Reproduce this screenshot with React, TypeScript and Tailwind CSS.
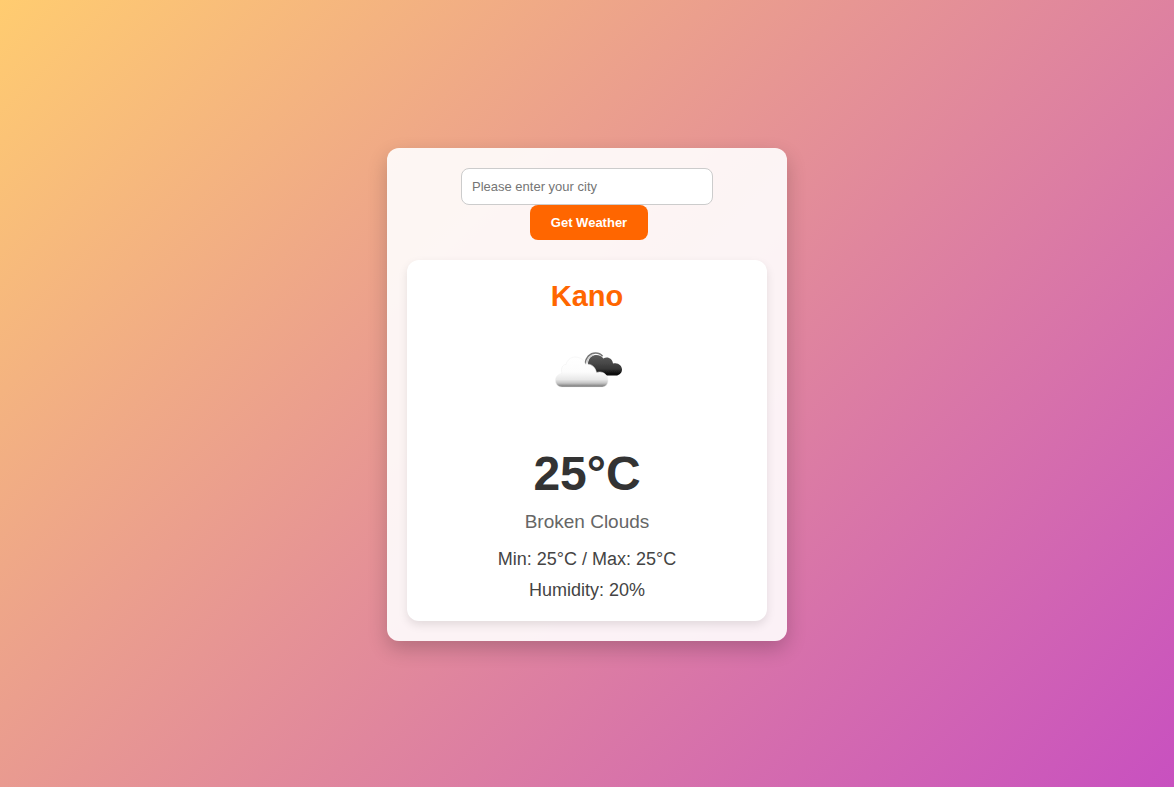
import { useState, type FormEvent } from "react";

function BrokenCloudsIcon() {
  return (
    <svg viewBox="0 0 100 100" className="size-[100px]" role="img" aria-label="Broken clouds">
      <defs>
        <linearGradient id="backCloud" x1="0" y1="35" x2="0" y2="56" gradientUnits="userSpaceOnUse">
          <stop offset="0" stopColor="#5c5c5c" />
          <stop offset="0.3" stopColor="#4c4c4c" />
          <stop offset="0.65" stopColor="#383838" />
          <stop offset="0.85" stopColor="#141414" />
          <stop offset="1" stopColor="#000000" />
        </linearGradient>
        <linearGradient id="frontCloud" x1="0" y1="37" x2="0" y2="67" gradientUnits="userSpaceOnUse">
          <stop offset="0" stopColor="#ffffff" />
          <stop offset="0.5" stopColor="#fcfcfc" />
          <stop offset="0.75" stopColor="#e8e8e8" />
          <stop offset="0.87" stopColor="#c4c4c4" />
          <stop offset="1" stopColor="#707070" />
        </linearGradient>
        <filter id="soften" x="-10%" y="-10%" width="120%" height="120%">
          <feGaussianBlur stdDeviation="0.7" />
        </filter>
      </defs>
      <g filter="url(#soften)">
        <path
          d="M51 46C50.500 40 53.500 35 59 35C62.500 35 65 36.500 66.300 38.500C70.500 36 75.500 38.500 76 43.500C81 42 85 45.500 85 49.500C85 53 82 55.500 79 55.500H60Z"
          fill="url(#backCloud)"
        />
        <path
          d="M47.800 44.500C48.500 37.500 53 33 58.500 33C61.500 33 64 34.200 65.600 36.200"
          fill="none"
          stroke="#777777"
          strokeWidth="1.500"
        />
        <path
          d="M49.800 43.500C50.300 39 53 35.600 56.500 35.100"
          fill="none"
          stroke="#cccccc"
          strokeWidth="1.300"
        />
        <path
          d="M25 67C21 67 18.500 64 18.500 60.500C18.500 57 20.500 54.500 25 53.500C23.500 48.500 25.500 44.500 29 44.500C30 40 34 37 38 37C43 37 47.500 40 48.500 44.500C54 43 58.500 47 59.500 52.500C65 50.500 71 54 71 60.500C71 64.500 68.500 67 64.500 67Z"
          fill="url(#frontCloud)"
          stroke="#eeeeee"
          strokeWidth="0.500"
        />
      </g>
    </svg>
  );
}

export default function App() {
  const [city, setCity] = useState("");
  const submit = (event: FormEvent) => event.preventDefault();

  return (
    <main className="flex min-h-screen items-center justify-center bg-[linear-gradient(135deg,#ffcc70,#c850c0)] pt-0.5 font-['Liberation_Sans',Arial,sans-serif]">
      <div className="w-full max-w-[400px] rounded-xl bg-white/90 p-5 text-center shadow-[0_8px_20px_rgba(0,0,0,0.2)]">
        <form onSubmit={submit} className="mb-5 flex flex-col items-center">
          <input
            type="text"
            aria-label="City"
            placeholder="Please enter your city"
            value={city}
            onChange={(event) => setCity(event.target.value)}
            className="w-[70%] rounded-lg border border-[#cccccc] bg-white p-2.5 text-[13px] leading-[15px] placeholder:text-[#757575]"
          />
          <button
            type="submit"
            className="ml-1 cursor-pointer rounded-lg bg-[#ff6600] px-[21px] py-2.5 text-[13px] leading-[15px] font-bold text-white"
          >
            Get Weather
          </button>
        </form>
        <section className="flex flex-col items-center rounded-xl bg-white p-5 shadow-[0_4px_10px_rgba(0,0,0,0.1)]">
          <h1 className="mb-2 text-[29px] leading-8 font-bold text-[#ff6600]">Kano</h1>
          <BrokenCloudsIcon />
          <p className="mt-[26px] mb-2.5 text-5xl leading-[55px] font-bold text-[#333333]">25°C</p>
          <p className="mb-4 text-[19px] leading-[22px] text-[#666666]">Broken Clouds</p>
          <p className="mb-2.5 text-lg leading-[21px] text-[#444444]">Min: 25°C / Max: 25°C</p>
          <p className="text-lg leading-[21px] text-[#444444]">Humidity: 20%</p>
        </section>
      </div>
    </main>
  );
}
